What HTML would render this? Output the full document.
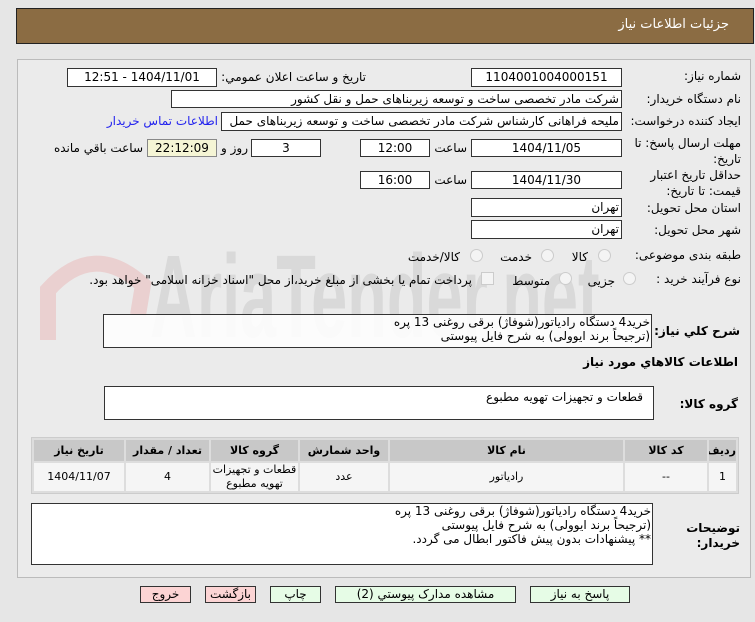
<!DOCTYPE html>
<html><head><meta charset="utf-8"><style>
body{margin:0;width:755px;height:622px;background:#e6e6e6;font-family:"DejaVu Sans","Liberation Sans",sans-serif;font-size:12px;color:#000;position:relative;overflow:hidden;direction:rtl}
.a{position:absolute;white-space:nowrap}
.hd{left:16px;top:8px;width:736px;height:34px;background:#8b6c43;border:1px solid #222}
.pn{left:17px;top:59px;width:732px;height:517px;background:#ebebeb;border:1px solid #bbb}
.b{position:absolute;background:#fff;border:1px solid #333;box-sizing:border-box;white-space:nowrap;overflow:hidden;font-size:12px;line-height:16px}
.c{text-align:center}
.r{text-align:right;padding-right:2px}
.l{position:absolute;white-space:nowrap;text-align:right}
.rad{position:absolute;width:11px;height:11px;border-radius:50%;border:1px solid #ccc;background:#f4f4f4}
table{position:absolute;border-collapse:separate;border-spacing:2px;background:#ddd;border:1px solid #ccc;table-layout:fixed}
td{text-align:center;font-size:11px;padding:0;overflow:hidden}
.th td{background:#c8c8c8;font-weight:bold;height:21px}
.tr td{background:#f5f5f5;height:28px;line-height:14px}
.btn{position:absolute;top:586px;height:17px;border:1px solid #333;box-sizing:border-box;text-align:center;line-height:15px;font-size:12px}
</style></head><body>
<div class="a hd"></div>
<div class="a" style="right:26px;top:17px;color:#fff;font-size:13px">جزئیات اطلاعات نیاز</div>
<div class="a pn"></div>
<svg class="a" style="left:18px;top:245px" width="140" height="95"><path d="M30 95 L30 45 Q75 -5 125 40 L120 70" fill="none" stroke="#ead0d0" stroke-width="16"/></svg>
<div class="a" style="left:150px;top:232px;font-size:118px;font-weight:bold;color:#d9d9d9;direction:ltr;font-family:'Liberation Sans',sans-serif;transform:scaleX(0.55);transform-origin:0 0;line-height:130px">AriaTender.net</div>

<div class="l" style="right:14px;top:69px">شماره نیاز:</div>
<div class="b c" style="left:471px;top:68px;width:151px;height:19px">1104001004000151</div>
<div class="l" style="right:389px;top:70px">تاریخ و ساعت اعلان عمومي:</div>
<div class="b c" style="left:67px;top:68px;width:150px;height:19px">1404/11/01 - 12:51</div>

<div class="l" style="right:14px;top:92px">نام دستگاه خریدار:</div>
<div class="b r" style="left:171px;top:90px;width:451px;height:18px">شرکت مادر تخصصی ساخت و توسعه زیربناهای حمل و نقل کشور</div>

<div class="l" style="right:14px;top:114px">ایجاد کننده درخواست:</div>
<div class="b r" style="left:221px;top:112px;width:401px;height:19px">ملیحه فراهانی کارشناس شرکت مادر تخصصی ساخت و توسعه زیربناهای حمل</div>
<div class="l" style="right:537px;top:114px;color:#2222ee">اطلاعات تماس خریدار</div>

<div class="l" style="right:14px;top:135px;line-height:16px">مهلت ارسال پاسخ: تا<br>تاریخ:</div>
<div class="b c" style="left:471px;top:139px;width:151px;height:18px">1404/11/05</div>
<div class="l" style="right:288px;top:141px">ساعت</div>
<div class="b c" style="left:360px;top:139px;width:70px;height:18px">12:00</div>
<div class="b c" style="left:251px;top:139px;width:70px;height:18px">3</div>
<div class="l" style="right:507px;top:141px">روز و</div>
<div class="b c" style="left:147px;top:139px;width:70px;height:18px;background:#f5f5d5;border-color:#888">22:12:09</div>
<div class="l" style="right:612px;top:141px">ساعت باقي مانده</div>

<div class="l" style="right:14px;top:167px;line-height:16px">حداقل تاریخ اعتبار<br>قیمت: تا تاریخ:</div>
<div class="b c" style="left:471px;top:171px;width:151px;height:18px">1404/11/30</div>
<div class="l" style="right:288px;top:173px">ساعت</div>
<div class="b c" style="left:360px;top:171px;width:70px;height:18px">16:00</div>

<div class="l" style="right:14px;top:201px">استان محل تحویل:</div>
<div class="b r" style="left:471px;top:198px;width:151px;height:19px">تهران</div>
<div class="l" style="right:14px;top:223px">شهر محل تحویل:</div>
<div class="b r" style="left:471px;top:220px;width:151px;height:19px">تهران</div>

<div class="l" style="right:14px;top:248px">طبقه بندی موضوعی:</div>
<div class="rad" style="left:598px;top:249px"></div><div class="l" style="right:167px;top:250px">کالا</div>
<div class="rad" style="left:541px;top:249px"></div><div class="l" style="right:223px;top:250px">خدمت</div>
<div class="rad" style="left:470px;top:249px"></div><div class="l" style="right:295px;top:250px">کالا/خدمت</div>

<div class="l" style="right:14px;top:272px">نوع فرآیند خرید :</div>
<div class="rad" style="left:623px;top:272px"></div><div class="l" style="right:140px;top:274px">جزیی</div>
<div class="rad" style="left:559px;top:272px"></div><div class="l" style="right:205px;top:274px">متوسط</div>
<div class="a" style="left:481px;top:272px;width:11px;height:11px;border:1px solid #ccc;background:#f4f4f4"></div>
<div class="l" style="right:283px;top:273px">پرداخت تمام یا بخشی از مبلغ خرید،از محل "اسناد خزانه اسلامی" خواهد بود.</div>

<div class="l" style="right:15px;top:324px;font-weight:bold">شرح كلي نياز:</div>
<div class="b" style="left:103px;top:314px;width:549px;height:34px;text-align:right;padding-right:1px;line-height:14px;white-space:normal;background:rgba(255,255,255,0.85)">خرید4 دستگاه رادیاتور(شوفاژ) برقی روغنی 13 پره<br>(ترجیحاً برند ایوولی) به شرح فایل پیوستی</div>
<div class="l" style="right:17px;top:355px;font-weight:bold">اطلاعات كالاهاي مورد نياز</div>
<div class="l" style="right:17px;top:397px;font-weight:bold">گروه کالا:</div>
<div class="b" style="left:104px;top:386px;width:550px;height:34px;text-align:right;padding-right:10px;padding-top:2px">قطعات و تجهیزات تهویه مطبوع</div>

<table style="left:31px;top:437px;width:708px">
<tr class="th"><td style="width:27px">ردیف</td><td style="width:82px">کد کالا</td><td style="width:233px">نام کالا</td><td style="width:88px">واحد شمارش</td><td style="width:87px">گروه کالا</td><td style="width:83px">تعداد / مقدار</td><td>تاریخ نیاز</td></tr>
<tr class="tr"><td>1</td><td>--</td><td>رادیاتور</td><td>عدد</td><td><div style="height:28px;padding-top:0">قطعات و تجهیزات<br>تهویه مطبوع</div></td><td>4</td><td>1404/11/07</td></tr>
</table>

<div class="l" style="right:15px;top:521px;font-weight:bold;line-height:15px">توضیحات<br>خریدار:</div>
<div class="b" style="left:31px;top:503px;width:622px;height:62px;text-align:right;padding-right:1px;line-height:14px;white-space:normal">خرید4 دستگاه رادیاتور(شوفاژ) برقی روغنی 13 پره<br>(ترجیحاً برند ایوولی) به شرح فایل پیوستی<br>** پیشنهادات بدون پیش فاکتور ابطال می گردد.</div>

<div class="btn" style="left:140px;width:51px;background:#fcd4d4">خروج</div>
<div class="btn" style="left:205px;width:51px;background:#fcd4d4">بازگشت</div>
<div class="btn" style="left:270px;width:51px;background:#e6fce6">چاپ</div>
<div class="btn" style="left:335px;width:181px;background:#e6fce6">مشاهده مدارک پیوستي (2)</div>
<div class="btn" style="left:530px;width:100px;background:#e6fce6">پاسخ به نیاز</div>
</body></html>
